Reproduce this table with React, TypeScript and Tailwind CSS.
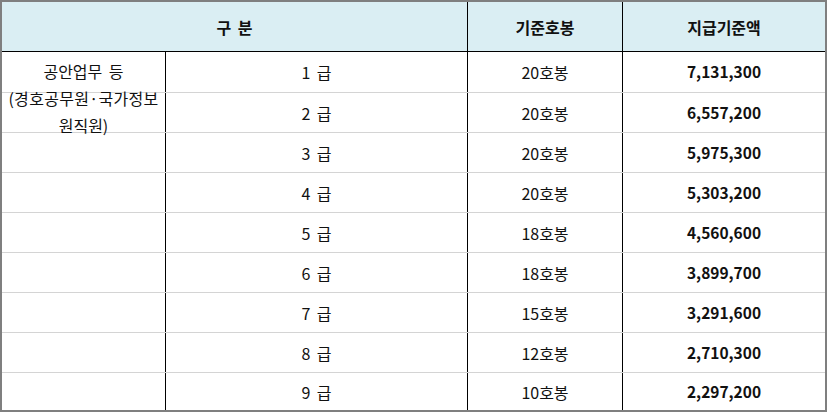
import React from 'react'

const ROWS = [
  { grade: '1 급', step: '20호봉', amount: '7,131,300' },
  { grade: '2 급', step: '20호봉', amount: '6,557,200' },
  { grade: '3 급', step: '20호봉', amount: '5,975,300' },
  { grade: '4 급', step: '20호봉', amount: '5,303,200' },
  { grade: '5 급', step: '18호봉', amount: '4,560,600' },
  { grade: '6 급', step: '18호봉', amount: '3,899,700' },
  { grade: '7 급', step: '15호봉', amount: '3,291,600' },
  { grade: '8 급', step: '12호봉', amount: '2,710,300' },
  { grade: '9 급', step: '10호봉', amount: '2,297,200' },
]

const font = { fontFamily: '"Noto Sans CJK KR", "Noto Sans", sans-serif' }

export default function App() {
  return (
    <div
      className="w-[827px] h-[412px] bg-white border-2 border-[#7f7f7f] text-[16px] text-[#111] [word-spacing:3px]"
      style={font}
    >
      {/* header */}
      <div className="grid grid-cols-[466px_155px_202px] h-[50px] bg-[#daeef3] border-b border-black font-semibold">
        <div className="flex items-center justify-center border-r border-black">구 분</div>
        <div className="flex items-center justify-center border-r border-black">기준호봉</div>
        <div className="flex items-center justify-center">지급기준액</div>
      </div>

      {/* body */}
      <div className="relative">
        {ROWS.map((r, i) => {
          const last = i === ROWS.length - 1
          const h = i === 0 ? 'h-[41px]' : last ? 'h-[37px]' : 'h-[40px]'
          return (
            <div
              key={r.grade}
              className={`grid grid-cols-[164px_302px_155px_202px] ${h} ${last ? '' : 'border-b border-[#d4d4d4]'}`}
            >
              <div className="border-r border-black" />
              <div className="flex items-center justify-center border-r border-black">{r.grade}</div>
              <div className="flex items-center justify-center border-r border-black">{r.step}</div>
              <div className="flex items-center justify-center font-bold text-[15.5px]">{r.amount}</div>
            </div>
          )
        })}

        {/* merged category label overlays the first column */}
        <div className="absolute left-0 top-[6px] w-[163px] flex flex-col items-center leading-[27px] whitespace-nowrap">
          <span>공안업무 등</span>
          <span className="tracking-[0.3px]">(경호공무원·국가정보</span>
          <span>원직원)</span>
        </div>
      </div>
    </div>
  )
}
